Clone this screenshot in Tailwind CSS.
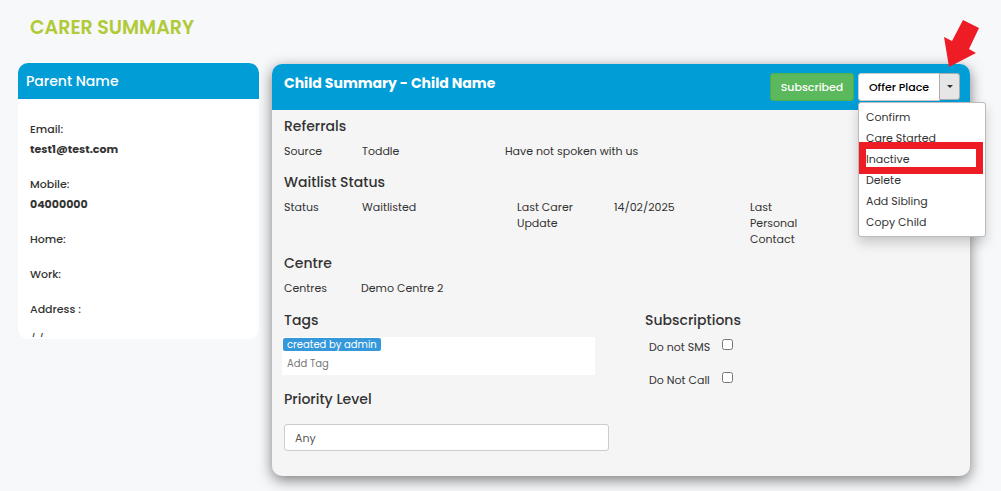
<!DOCTYPE html>
<html lang="en">

<head>
    <meta charset="UTF-8">
    <meta name="viewport" content="width=device-width, initial-scale=1.0">
    <title>Carer Summary</title>
    <script src="https://cdn.jsdelivr.net/npm/@tailwindcss/browser@4"></script>
</head>

<body class="bg-[#f7f8fa] font-['Poppins','Inter',sans-serif] text-[11px] leading-4 text-[#333]">
    <h1 class="pt-4 pl-[30px] text-[19px] leading-6 font-semibold text-[#b0cb37]">CARER SUMMARY</h1>

    <main class="flex items-start gap-[13px] pt-[23px] pr-[31px] pb-4 pl-[18px]">
        <!-- Parent -->
        <aside class="w-[241px] shrink-0 overflow-hidden rounded-[10px] bg-white">
            <h2 class="bg-[#019dd7] px-2 py-2 text-[14px] leading-5 font-medium text-white">Parent Name</h2>
            <dl class="px-3 pt-5 pb-[2px] leading-5">
                <dt class="font-medium">Email:</dt>
                <dd class="font-bold">test1@test.com</dd>
                <dt class="mt-[15px] font-medium">Mobile:</dt>
                <dd class="font-bold">04000000</dd>
                <dt class="mt-[15px] font-medium">Home:</dt>
                <dt class="mt-[15px] font-medium">Work:</dt>
                <dt class="mt-[15px] font-medium">Address :</dt>
                <dd class="mt-[10px] h-2 overflow-hidden">/ /</dd>
            </dl>
        </aside>

        <!-- Child -->
        <section class="mt-px min-w-0 flex-1 rounded-[10px] bg-[#f5f5f5] shadow-[0_4px_14px_rgba(0,0,0,0.5)]">
            <header class="flex items-start justify-between rounded-t-[10px] bg-[#019dd7] pt-[9px] pr-[10px] pb-[9px] pl-3">
                <h2 class="text-[14px] leading-5 font-bold text-white">Child Summary - Child Name</h2>
                <div class="flex gap-1">
                    <button class="h-7 w-[84px] rounded-[3px] border border-[#4cae4c] bg-[#5cb85c] font-medium text-white">Subscribed</button>
                    <div class="relative flex">
                        <button class="h-7 w-[82px] rounded-l-[3px] border border-[#ccc] bg-white font-medium text-black">Offer Place</button>
                        <button class="-ml-px flex h-[27px] w-[21px] items-center justify-center rounded-r-[3px] border border-[#adadad] bg-[#e6e6e6]" aria-label="More actions">
                            <svg class="h-[3px] w-[6px]" viewBox="0 0 6 3" fill="#333"><path d="M0 0h6L3 3z" /></svg>
                        </button>

                        <ul class="absolute top-[29px] left-0 z-10 w-[128px] rounded-[3px] border border-[#bbb] bg-white pt-1 pb-[3px] pl-[7px] leading-[21px] shadow-[0_6px_12px_rgba(0,0,0,0.18)]">
                            <li><a href="#">Confirm</a></li>
                            <li><a href="#">Care Started</a></li>
                            <li><a href="#">Inactive</a></li>
                            <li><a href="#">Delete</a></li>
                            <li><a href="#">Add Sibling</a></li>
                            <li><a href="#">Copy Child</a></li>
                        </ul>
                        <div class="absolute top-[69px] left-px z-20 h-8 w-[124px] border-[7px] border-[#ee1c25]"></div>
                        <svg class="absolute -top-[53px] -right-[19px] z-20 h-[47px] w-[35px]" viewBox="0 0 35 47" fill="#ee1c25">
                            <path d="M19 0L35 8L25 29L32 33L5 47L0 17L8 21Z" />
                        </svg>
                    </div>
                </div>
            </header>

            <div class="px-3 pt-1 pb-[25px]">
                <h3 class="mb-[5px] text-[14px] leading-6 font-medium">Referrals</h3>
                <div class="grid grid-cols-[78fr_143fr_453fr] pb-[11px]">
                    <span>Source</span>
                    <span>Toddle</span>
                    <span>Have not spoken with us</span>
                </div>

                <h3 class="mb-[5px] text-[14px] leading-6 font-medium">Waitlist Status</h3>
                <div class="grid grid-cols-[78fr_155fr_97fr_136fr_60fr_148fr] pb-1">
                    <span>Status</span>
                    <span>Waitlisted</span>
                    <span class="pr-4">Last Carer Update</span>
                    <span>14/02/2025</span>
                    <span>Last Personal Contact</span>
                </div>

                <h3 class="mb-[5px] text-[14px] leading-6 font-medium">Centre</h3>
                <div class="grid grid-cols-[77fr_597fr] pb-3">
                    <span>Centres</span>
                    <span>Demo Centre 2</span>
                </div>

                <div class="grid grid-cols-[361fr_313fr]">
                    <div class="pr-9">
                        <h3 class="mb-[5px] text-[14px] leading-6 font-medium">Tags</h3>
                        <div class="-ml-[2px] mr-[14px] h-[38px] bg-white p-px text-[10px]">
                            <span class="block w-fit rounded-[2px] bg-[#3498db] px-1 leading-[13px] text-white">created by admin</span>
                            <input type="text" placeholder="Add Tag" aria-label="Add Tag" class="mt-[5px] block h-4 w-full px-1 placeholder:text-[#777]">
                        </div>
                        <label for="priority" class="mt-3 block text-[14px] leading-6 font-medium">Priority Level</label>
                        <select id="priority" class="mt-[13px] block h-[27px] w-full appearance-none rounded-[3px] border border-[#ccc] bg-white px-[10px] text-[#555]">
                            <option>Any</option>
                        </select>
                    </div>
                    <div>
                        <h3 class="mb-[7px] text-[14px] leading-6 font-medium">Subscriptions</h3>
                        <div class="flex flex-col gap-[17px] pl-1">
                            <div class="flex items-start">
                                <label for="sms" class="w-[73px] whitespace-nowrap">Do not SMS</label>
                                <input id="sms" type="checkbox" class="h-[11px] w-[11px]">
                            </div>
                            <div class="flex items-start">
                                <label for="call" class="w-[73px] whitespace-nowrap">Do Not Call</label>
                                <input id="call" type="checkbox" class="h-[11px] w-[11px]">
                            </div>
                        </div>
                    </div>
                </div>
            </div>
        </section>
    </main>
</body>

</html>
